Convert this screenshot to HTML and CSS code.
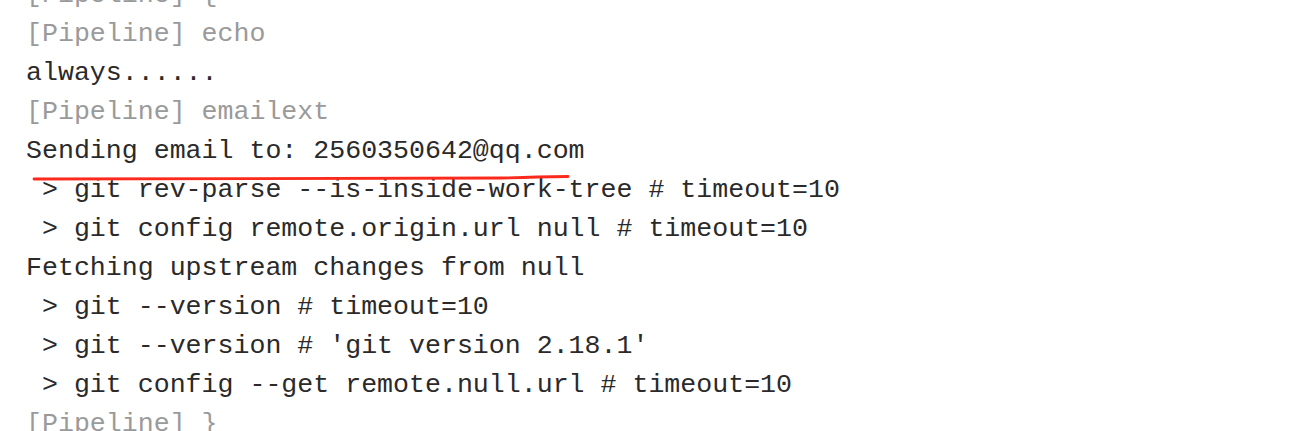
FILE: index.html
```html
<!DOCTYPE html>
<html>
<head>
<meta charset="utf-8">
<link rel="stylesheet" href="styles.css">
</head>
<body>
<div class="console">
<pre class="log"><span class="pipe">[Pipeline] {</span>
<span class="pipe">[Pipeline] echo</span>
always......
<span class="pipe">[Pipeline] emailext</span>
Sending email to: 2560350642@qq.com
 &gt; git rev-parse --is-inside-work-tree # timeout=10
 &gt; git config remote.origin.url null # timeout=10
Fetching upstream changes from null
 &gt; git --version # timeout=10
 &gt; git --version # 'git version 2.18.1'
 &gt; git config --get remote.null.url # timeout=10
<span class="pipe">[Pipeline] }</span></pre>
<svg class="mark" width="560" height="12" viewBox="0 0 560 12"><path d="M2 8 L470 7 Q490 6.6 505 6 L536 5.5" fill="none" stroke="#fb2a1c" stroke-width="2.8" stroke-linecap="round"/></svg>
</div>
</body>
</html>
```
FILE: styles.css
```css
html, body {
  margin: 0;
  padding: 0;
  background: #fff;
  overflow: hidden;
}
.console {
  position: relative;
  height: 431px;
  overflow: hidden;
}
.log {
  margin: -24px 0 0 0;
  padding: 0 0 0 26px;
  font-family: "Liberation Mono", "Courier New", monospace;
  font-size: 26.6px;
  line-height: 39px;
  color: #2a2a2a;
}
.pipe {
  color: #9a9a9a;
}
.mark {
  position: absolute;
  left: 32px;
  top: 171px;
}
```
